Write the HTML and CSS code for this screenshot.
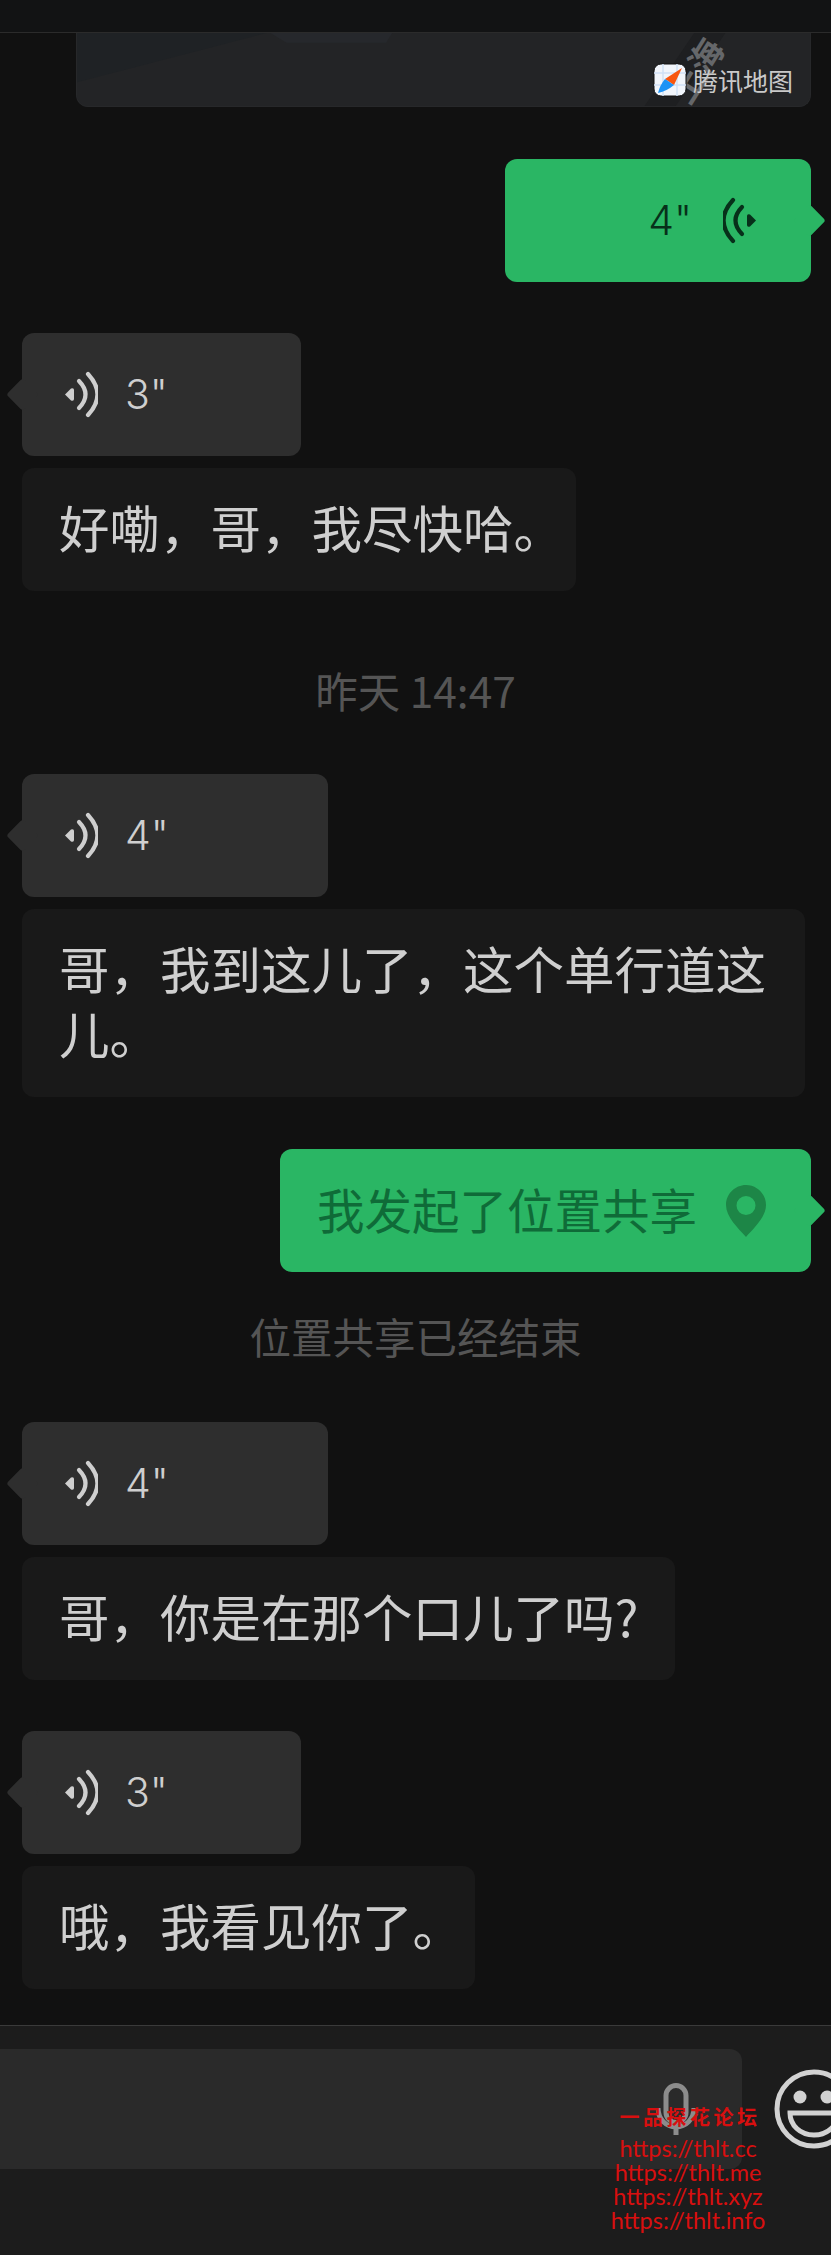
FILE: index.html
```html
<!DOCTYPE html>
<html lang="zh-CN">
<head>
    <meta charset="UTF-8">
    <meta name="viewport" content="width=device-width, initial-scale=1.0">
    <title>聊天</title>
    <link rel="stylesheet" href="styles.css">
</head>
<body>
    <header class="topbar"></header>

    <main class="chat">
        <div class="map-card">
            <svg class="map-bg" viewBox="0 0 735 74" preserveAspectRatio="none">
                <polygon points="0,50 190,0 0,0" fill="#1f2225"/>
                <polygon points="194,0 210,10 310,10 316,0" fill="#26282c"/>
                <path d="M578 84 L648 -20" stroke="#1e1f21" stroke-width="26" fill="none"/>
            </svg>
            <span class="map-road">上海</span>
            <div class="map-brand">
                <svg class="map-logo" viewBox="0 0 34 34">
                    <rect x="1" y="1" width="32" height="32" rx="7" fill="#f1f5fb" stroke="#111" stroke-width="1"/>
                    <path d="M1 22H33M1 10H33M10 1V33M24 1V33" stroke="#cfe0f6" stroke-width="1.5"/>
                    <path d="M29 5 L21 22 L12 16 Z" fill="#f8560f"/>
                    <path d="M12 16 L21 22 Q14 28 5 30 Q7 22 12 16 Z" fill="#1d93f5"/>
                </svg>
                <span>腾讯地图</span>
            </div>
        </div>

        <div class="bubble voice mine dur-4">
            <span class="secs">4"</span>
            <svg class="wave" viewBox="0 0 34 47"><use href="#wave-mark"/></svg>
        </div>

        <div class="bubble voice dur-3 gap-top">
            <svg class="wave" viewBox="0 0 34 47"><use href="#wave-mark"/></svg>
            <span class="secs">3"</span>
        </div>
        <div class="bubble text">好嘞，哥，我尽快哈<span class="stop">。</span></div>

        <div class="sys-msg time-msg">昨天 14:47</div>

        <div class="bubble voice dur-4">
            <svg class="wave" viewBox="0 0 34 47"><use href="#wave-mark"/></svg>
            <span class="secs">4"</span>
        </div>
        <div class="bubble text wide">哥，我到这儿了，这个单行道这儿。</div>

        <div class="bubble share mine">
            <span class="share-label">我发起了位置共享</span>
            <svg class="pin" viewBox="0 0 40 52">
                <path fill-rule="evenodd" d="M20 0C9 0 0 9 0 20C0 32 12 43 20 52C28 43 40 32 40 20C40 9 31 0 20 0ZM20 11A9.500 9.500 0 1 1 20 30A9.500 9.500 0 1 1 20 11Z"/>
            </svg>
        </div>

        <div class="sys-msg">位置共享已经结束</div>

        <div class="bubble voice dur-4">
            <svg class="wave" viewBox="0 0 34 47"><use href="#wave-mark"/></svg>
            <span class="secs">4"</span>
        </div>
        <div class="bubble text">哥，你是在那个口儿了吗?</div>

        <div class="bubble voice dur-3 gap-top">
            <svg class="wave" viewBox="0 0 34 47"><use href="#wave-mark"/></svg>
            <span class="secs">3"</span>
        </div>
        <div class="bubble text">哦，我看见你了<span class="stop">。</span></div>
    </main>

    <footer class="inputbar">
        <div class="input-box">
            <svg class="mic" viewBox="0 0 40 52">
                <rect x="10" y="2.500" width="20" height="37" rx="10" fill="none" stroke="currentColor" stroke-width="5"/>
                <path d="M2 25C2 36 10 44 20 44C30 44 38 36 38 25M20 44V52" fill="none" stroke="currentColor" stroke-width="5"/>
            </svg>
        </div>
        <svg class="smile" viewBox="0 0 80 80">
            <circle cx="40" cy="40" r="37" fill="none" stroke="currentColor" stroke-width="5"/>
            <circle cx="26" cy="28" r="6.500" fill="currentColor"/>
            <circle cx="53" cy="28" r="6.500" fill="currentColor"/>
            <path d="M16 44H64C64 56 54 66 40 66C26 66 16 56 16 44Z" fill="none" stroke="currentColor" stroke-width="5"/>
        </svg>
    </footer>

    <div class="watermark">
        <div class="wm-title">一品探花论坛</div>
        <div>https://thlt.cc</div>
        <div>https://thlt.me</div>
        <div>https://thlt.xyz</div>
        <div>https://thlt.info</div>
    </div>

    <!-- shared voice wave, drawn once -->
    <svg class="defs" aria-hidden="true">
        <defs>
            <g id="wave-mark">
                <path d="M1 23.500L7 17.500Q10 16.500 10 19V28Q10 30.500 7 29.500Z" fill="currentColor"/>
                <path d="M15 10Q28 23.500 15 37" fill="none" stroke="currentColor" stroke-width="4.200" stroke-linecap="round"/>
                <path d="M24 3Q43 23.500 24 44" fill="none" stroke="currentColor" stroke-width="4.200" stroke-linecap="round"/>
            </g>
        </defs>
    </svg>
</body>
</html>
```

FILE: styles.css
```css
* {
    margin: 0;
    padding: 0;
    box-sizing: border-box;
}

body {
    width: 831px;
    height: 2255px;
    overflow: hidden;
    position: relative;
    display: flex;
    flex-direction: column;
    background-color: #111;
    font-family: "Noto Sans CJK SC", "Noto Sans", sans-serif;
    color: #cfcfcf;
}

.topbar {
    flex-shrink: 0;
    height: 33px;
    background-color: #121314;
    border-bottom: 1px solid #2b2b2b;
}

.chat {
    flex: 1;
    min-height: 0;
    display: flex;
    flex-direction: column;
    align-items: flex-start;
    padding: 0 20px 0 22px;
}

/* map card cut off by the top bar */
.map-card {
    position: relative;
    flex-shrink: 0;
    align-self: flex-end;
    width: 735px;
    height: 74px;
    overflow: hidden;
    background-color: #232426;
    border: 1px solid #27282a;
    border-top: 0;
    border-radius: 0 0 12px 12px;
}

.map-bg {
    position: absolute;
    inset: 0;
    width: 100%;
    height: 100%;
}

.map-road {
    position: absolute;
    left: 585px;
    top: 20px;
    transform: rotate(-58deg);
    font-size: 34px;
    line-height: 34px;
    font-weight: 700;
    color: #65676a;
    white-space: nowrap;
}

.map-brand {
    position: absolute;
    right: 17px;
    bottom: 9px;
    display: flex;
    align-items: center;
    gap: 6px;
    font-size: 25px;
    line-height: 34px;
    color: #c9c9c9;
}

.map-logo {
    width: 34px;
    height: 34px;
}

.bubble {
    position: relative;
    flex-shrink: 0;
    border-radius: 12px;
    font-size: 50.500px;
    line-height: 65px;
}

.mine {
    align-self: flex-end;
    margin-top: 52px;
    background-color: #2ab664;
}

.mine::after {
    content: "";
    position: absolute;
    right: -10px;
    top: 50%;
    width: 23px;
    height: 23px;
    margin-top: -12px;
    background-color: #2ab664;
    border-radius: 3px;
    transform: rotate(45deg);
}

.gap-top {
    margin-top: 51px;
}

.voice {
    display: flex;
    align-items: center;
    gap: 27px;
    height: 123px;
    padding-left: 42px;
    background-color: #2e2e2e;
}

.voice:not(.mine)::before {
    content: "";
    position: absolute;
    left: -11px;
    top: 50%;
    width: 23px;
    height: 23px;
    margin-top: -12px;
    background-color: #2e2e2e;
    border-radius: 3px;
    transform: rotate(45deg);
}

.dur-3 {
    width: 279px;
}

.dur-4 {
    width: 306px;
}

.voice.mine {
    justify-content: flex-end;
    gap: 31px;
    padding: 0 54px 0 0;
    background-color: #2ab664;
    color: #07301a;
}

.voice.mine .wave {
    transform: scaleX(-1);
}

.wave {
    width: 34px;
    height: 47px;
    flex-shrink: 0;
}

.secs {
    font-family: Inter, sans-serif;
    font-weight: 300;
    font-size: 41px;
    line-height: 47px;
}

.text {
    margin-top: 12px;
    padding: 26px 37px 32px;
    background-color: #191919;
    white-space: nowrap;
}

.text.wide {
    width: 783px;
    white-space: normal;
}

/* the closing stop sits in half a cell */
.stop {
    margin-right: -25px;
}

.share {
    display: flex;
    align-items: center;
    gap: 29px;
    width: 531px;
    height: 123px;
    padding-left: 37px;
    font-size: 47.500px;
    color: #0f6b38;
}

.share-label {
    margin-bottom: 4px;
}

.pin {
    width: 40px;
    height: 52px;
    fill: #1d8647;
}

.sys-msg {
    flex-shrink: 0;
    align-self: center;
    margin: 38px 0 60px -2px;
    font-size: 41.500px;
    line-height: 52px;
    color: #555;
}

.time-msg {
    margin: 73px 0 58px -2px;
    font-size: 42.500px;
}

.inputbar {
    flex-shrink: 0;
    display: flex;
    align-items: center;
    height: 230px;
    padding-bottom: 63px;
    background-color: #1c1c1c;
    border-top: 1px solid #3a3a3a;
}

.input-box {
    display: flex;
    align-items: center;
    justify-content: flex-end;
    flex-shrink: 0;
    width: 742px;
    height: 120px;
    padding-right: 46px;
    background-color: #2a2a2a;
    border-radius: 0 12px 12px 0;
}

.mic {
    width: 40px;
    height: 52px;
    color: #8c8c8c;
}

.smile {
    width: 80px;
    height: 80px;
    margin-left: 32px;
    flex-shrink: 0;
    color: #d2d2d2;
}

.watermark {
    position: absolute;
    left: 600px;
    top: 2103px;
    width: 176px;
    text-align: center;
    font-family: Lato, sans-serif;
    font-size: 23.500px;
    line-height: 24px;
    color: #d80f0f;
}

.wm-title {
    padding-left: 4px;
    font-family: "Noto Sans CJK SC", sans-serif;
    font-weight: 700;
    font-size: 20px;
    line-height: 27px;
    letter-spacing: 3.500px;
    margin-bottom: 6px;
}

.defs {
    position: absolute;
    width: 0;
    height: 0;
}
```
